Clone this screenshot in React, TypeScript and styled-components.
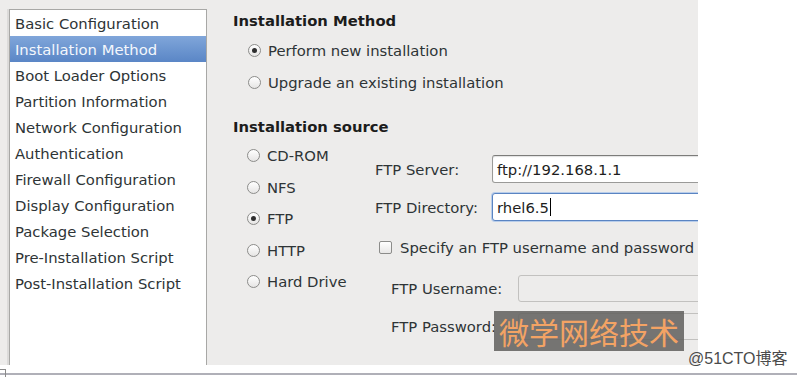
import React from "react";
import styled, { createGlobalStyle, css } from "styled-components";

const Global = createGlobalStyle`
  html, body { margin: 0; padding: 0; background: #ffffff; }
  body { font-family: "DejaVu Sans", "Noto Sans", sans-serif; color: #2e3436; }
`;

const Page = styled.div`
  position: relative;
  width: 797px;
  height: 377px;
  overflow: hidden;
  background: #ffffff;
  display: flex;
  flex-direction: column;
`;

const Window = styled.div`
  position: relative;
  width: 698px;
  height: 365px;
  flex: none;
  box-sizing: border-box;
  background: #edeceb;
  padding: 9px 0 0 9px;
  display: flex;
  overflow: hidden;
`;

const Sidebar = styled.ul`
  list-style: none;
  margin: 0;
  padding: 0;
  flex: none;
  width: 198px;
  height: 380px;
  box-sizing: border-box;
  background: #ffffff;
  border: 1px solid #a8a8a6;
  box-shadow: -2px 0 0 #dcdbda;
`;

const SidebarItem = styled.li<{ $active?: boolean }>`
  height: 26px;
  line-height: 28px;
  overflow: hidden;
  padding-left: 5px;
  font-size: 14.8px;
  white-space: nowrap;
  color: #2e3436;
  ${(p) =>
    p.$active &&
    css`
      background: linear-gradient(#80a6da, #5a86c6);
      color: #f4f7fc;
    `}
`;

const Content = styled.div`
  flex: 1;
  margin-left: 26px;
  padding-top: 1px;
  display: flex;
  flex-direction: column;
  min-width: 0;
`;

const SectionTitle = styled.div<{ $gap?: number }>`
  height: 22px;
  line-height: 22px;
  font-size: 14.8px;
  font-weight: bold;
  color: #1c1c1c;
  white-space: nowrap;
  margin-top: ${(p) => p.$gap ?? 0}px;
`;

const MethodGroup = styled.div`
  margin-top: 2px;
  display: flex;
  flex-direction: column;
  padding-left: 15px;
`;

const OptionRow = styled.div<{ $h: number }>`
  height: ${(p) => p.$h}px;
  display: flex;
  align-items: center;
  gap: 7px;
  font-size: 14.8px;
  white-space: nowrap;
  color: #2e3436;
`;

const Radio = styled.span<{ $checked?: boolean }>`
  position: relative;
  flex: none;
  width: 13px;
  height: 13px;
  box-sizing: border-box;
  border-radius: 50%;
  border: 1px solid #8c8c8a;
  background: linear-gradient(#ffffff, #e6e5e4);
  ${(p) =>
    p.$checked &&
    css`
      &::after {
        content: "";
        position: absolute;
        left: 3px;
        top: 3px;
        width: 5px;
        height: 5px;
        border-radius: 50%;
        background: #2e2e2e;
      }
    `}
`;

const SourceArea = styled.div`
  margin-top: 2px;
  display: flex;
`;

const SourceList = styled.div`
  flex: none;
  width: 142px;
  box-sizing: border-box;
  padding-left: 14px;
  display: flex;
  flex-direction: column;
`;

const Form = styled.div`
  flex: none;
  width: 400px;
  padding-top: 15px;
  display: flex;
  flex-direction: column;
`;

const FieldRow = styled.div<{ $gap: number; $h: number; $indent?: number }>`
  margin-top: ${(p) => p.$gap}px;
  height: ${(p) => p.$h}px;
  padding-left: ${(p) => p.$indent ?? 0}px;
  display: flex;
  align-items: center;
`;

const Label = styled.span<{ $w: number }>`
  flex: none;
  width: ${(p) => p.$w}px;
  font-size: 14.8px;
  white-space: nowrap;
  color: #2e3436;
`;

const Field = styled.div<{ $focused?: boolean; $disabled?: boolean }>`
  flex: none;
  width: 260px;
  height: 100%;
  box-sizing: border-box;
  border-radius: 3px;
  padding-left: 4px;
  display: flex;
  align-items: center;
  font-size: 14.8px;
  white-space: nowrap;
  color: #1e1e1e;
  background: #ffffff;
  border: 1px solid #9a9a98;
  border-top-color: #7c7c7a;
  box-shadow: inset 0 1px 1px rgba(0, 0, 0, 0.12);
  ${(p) =>
    p.$focused &&
    css`
      border: 1px solid #5a84c2;
      box-shadow: 0 0 0 1px #b8cdea;
    `}
  ${(p) =>
    p.$disabled &&
    css`
      background: #edeceb;
      border: 1px solid #c2c1bf;
      box-shadow: none;
    `}
`;

const Caret = styled.span`
  display: inline-block;
  width: 1px;
  height: 18px;
  margin-left: 1px;
  background: #000;
`;

const Check = styled.span`
  flex: none;
  width: 13px;
  height: 13px;
  box-sizing: border-box;
  border: 1px solid #8c8c8a;
  border-radius: 2px;
  background: linear-gradient(#ffffff, #e8e7e6);
  margin-right: 8px;
`;

const CheckText = styled.span`
  font-size: 14.8px;
  white-space: nowrap;
  color: #2e3436;
`;

const Watermark = styled.div`
  position: absolute;
  left: 494px;
  top: 311px;
  width: 190px;
  height: 40px;
  background: rgba(100, 99, 97, 0.88);
  color: #f3a364;
  font-family: "Noto Sans CJK SC", sans-serif;
  font-size: 30px;
  line-height: 40px;
  padding-left: 5px;
  box-sizing: border-box;
  white-space: nowrap;
`;

const Credit = styled.div`
  position: absolute;
  left: 688px;
  top: 349px;
  font-family: "Liberation Sans", "Noto Sans CJK SC", sans-serif;
  font-size: 16px;
  line-height: 20px;
  color: #4a4a4a;
  white-space: nowrap;
`;

const BottomRule = styled.div`
  margin-top: 8px;
  height: 2px;
  background: #b0b0b8;
  flex: none;
`;

const Corner = styled.div`
  position: absolute;
  left: 0;
  top: 369px;
  width: 6px;
  height: 8px;
  box-sizing: border-box;
  border-top: 1px solid #8a8a8a;
  border-right: 1px solid #8a8a8a;
`;

const sections = [
  "Basic Configuration",
  "Installation Method",
  "Boot Loader Options",
  "Partition Information",
  "Network Configuration",
  "Authentication",
  "Firewall Configuration",
  "Display Configuration",
  "Package Selection",
  "Pre-Installation Script",
  "Post-Installation Script",
];

const sources = [
  { name: "CD-ROM", checked: false },
  { name: "NFS", checked: false },
  { name: "FTP", checked: true },
  { name: "HTTP", checked: false },
  { name: "Hard Drive", checked: false },
];

export default function App() {
  return (
    <Page>
      <Global />
      <Window>
        <Sidebar>
          {sections.map((s) => (
            <SidebarItem key={s} $active={s === "Installation Method"}>
              {s}
            </SidebarItem>
          ))}
        </Sidebar>
        <Content>
          <SectionTitle>Installation Method</SectionTitle>
          <MethodGroup>
            <OptionRow $h={32}>
              <Radio $checked />
              Perform new installation
            </OptionRow>
            <OptionRow $h={32}>
              <Radio />
              Upgrade an existing installation
            </OptionRow>
          </MethodGroup>
          <SectionTitle $gap={18}>Installation source</SectionTitle>
          <SourceArea>
            <SourceList>
              {sources.map((s) => (
                <OptionRow key={s.name} $h={31.5}>
                  <Radio $checked={s.checked} />
                  {s.name}
                </OptionRow>
              ))}
            </SourceList>
            <Form>
              <FieldRow $gap={0} $h={28}>
                <Label $w={117}>FTP Server:</Label>
                <Field>ftp://192.168.1.1</Field>
              </FieldRow>
              <FieldRow $gap={10} $h={28}>
                <Label $w={117}>FTP Directory:</Label>
                <Field $focused>
                  rhel6.5
                  <Caret />
                </Field>
              </FieldRow>
              <FieldRow $gap={13} $h={26} $indent={4}>
                <Check />
                <CheckText>Specify an FTP username and password</CheckText>
              </FieldRow>
              <FieldRow $gap={15} $h={27} $indent={16}>
                <Label $w={127}>FTP Username:</Label>
                <Field $disabled />
              </FieldRow>
              <FieldRow $gap={11} $h={27} $indent={16}>
                <Label $w={127}>FTP Password:</Label>
                <Field $disabled />
              </FieldRow>
            </Form>
          </SourceArea>
        </Content>
      </Window>
      <BottomRule />
      <Watermark>微学网络技术</Watermark>
      <Credit>@51CTO博客</Credit>
      <Corner />
    </Page>
  );
}
